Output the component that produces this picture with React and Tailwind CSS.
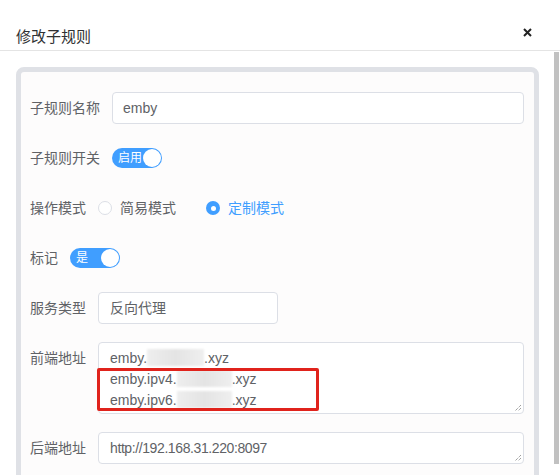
import React from 'react';

const FONT = { fontFamily: '"Liberation Sans", "Noto Sans CJK SC", sans-serif' };

// Blurred (redacted) part of a domain
const Blur = ({ w }) => (
    <span
        className={`inline-block h-[17px] align-[-3px] bg-gradient-to-r from-[#eeeeee] via-[#e4e4e4] to-[#efefef] blur-[1px] ${w}`}
    />
);

// Small diagonal resize grip of a textarea
const Grip = () => (
    <svg className="absolute right-[1px] bottom-[1px] h-[9px] w-[9px]" viewBox="0 0 9 9">
        <path d="M8 2L2 8M8 5L5 8" stroke="#7a7a7a" strokeWidth="1" strokeDasharray="1 1" />
    </svg>
);

const Switch = ({ text }) => (
    <div className="relative flex h-[20px] w-[50px] items-center rounded-full bg-[#409eff]">
        <span className="pl-[6px] text-[12px] leading-none text-white">{text}</span>
        <span className="absolute right-[1px] top-[1px] h-[18px] w-[18px] rounded-full bg-white" />
    </div>
);

const Row = ({ label, children, top = false }) => (
    <div className={`mb-[18px] flex gap-[12px] ${top ? 'items-start' : 'items-center min-h-[32px]'}`}>
        <div className={`shrink-0 text-[14px] text-[#606266] ${top ? 'leading-[32px]' : ''}`}>{label}</div>
        {children}
    </div>
);

export default function App() {
    return (
        <div className="h-[475px] w-[560px] overflow-hidden bg-white" style={FONT}>
            {/* Header */}
            <div className="flex h-[51px] items-end justify-between border-b border-[#e4e4e4] pb-[3px] pl-[16px] pr-[28px]">
                <span className="text-[15px] leading-[20px] text-[#303133]">修改子规则</span>
                <svg className="mb-[10px] h-[9px] w-[9px]" viewBox="0 0 9 9">
                    <path d="M1 1L8 8M8 1L1 8" stroke="#222" strokeWidth="2" />
                </svg>
            </div>

            {/* Body */}
            <div className="flex">
                <div className="flex-1 pl-[16px] pr-[15px] pt-[16px]">
                    <div className="rounded-[8px] border-[5px] border-[#dfe1e6] bg-[#fdfcfc] pb-[40px] pl-[9px] pr-[10px] pt-[20px]">
                        <Row label="子规则名称">
                            <div className="flex h-[32px] flex-1 items-center rounded-[4px] border border-[#dcdfe6] bg-white px-[10px] text-[14px] text-[#606266]">
                                emby
                            </div>
                        </Row>

                        <Row label="子规则开关">
                            <Switch text="启用" />
                        </Row>

                        <Row label="操作模式">
                            <div className="flex items-center text-[14px]">
                                <span className="h-[14px] w-[14px] rounded-full border border-[#dcdfe6] bg-white" />
                                <span className="ml-[8px] text-[#606266]">简易模式</span>
                                <span className="ml-[30px] flex h-[14px] w-[14px] items-center justify-center rounded-full bg-[#409eff]">
                                    <span className="h-[5px] w-[5px] rounded-full bg-white" />
                                </span>
                                <span className="ml-[8px] text-[#409eff]">定制模式</span>
                            </div>
                        </Row>

                        <Row label="标记">
                            <Switch text="是" />
                        </Row>

                        <Row label="服务类型">
                            <div className="flex h-[32px] w-[180px] items-center rounded-[4px] border border-[#dcdfe6] bg-white px-[11px] text-[14px] text-[#606266]">
                                反向代理
                            </div>
                        </Row>

                        <Row label="前端地址" top>
                            <div className="relative h-[72px] flex-1 rounded-[4px] border border-[#dcdfe6] bg-white px-[11px] pt-[5px] text-[14px] leading-[21px] text-[#606266]">
                                <div>emby.<Blur w="w-[57px]" />.xyz</div>
                                <div>emby.ipv4.<Blur w="w-[55px]" />.xyz</div>
                                <div>emby.ipv6.<Blur w="w-[55px]" />.xyz</div>
                                <Grip />
                                {/* annotation box */}
                                <div className="absolute left-[-2px] top-[25px] h-[43px] w-[222px] rounded-[2px] border-[3px] border-[#e0231c]" />
                            </div>
                        </Row>

                        <Row label="后端地址" top>
                            <div className="relative flex h-[32px] flex-1 items-center rounded-[4px] border border-[#dcdfe6] bg-white px-[11px] text-[14px] tracking-[-0.4px] text-[#606266]">
                                http://192.168.31.220:8097
                                <Grip />
                            </div>
                        </Row>
                    </div>
                </div>

                {/* Scrollbar */}
                <div className="w-[6px] pt-[1px]">
                    <div className="h-[412px] w-[5px] bg-[#c1c1c1]" />
                </div>
            </div>
        </div>
    );
}
